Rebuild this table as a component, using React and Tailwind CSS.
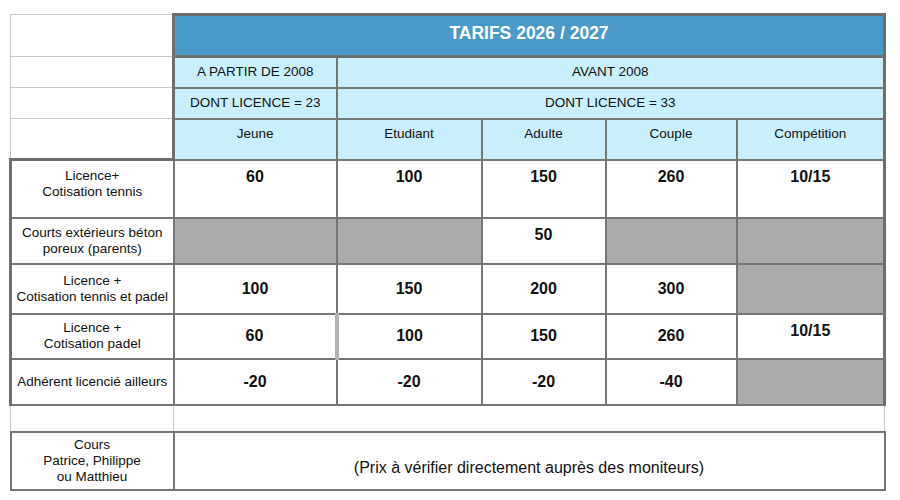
const light = "border border-[#c8c8c8]";
const dark = "border-2 border-[#767676]";
const grey = "bg-[#ababab]";

const rows = [
  {
    label: ["Licence+", "Cotisation tennis"],
    h: "h-[58px]",
    labelAlign: "align-top pt-[7px]",
    cells: [
      { v: "60", a: "top" },
      { v: "100", a: "top" },
      { v: "150", a: "top" },
      { v: "260", a: "top" },
      { v: "10/15", a: "top" },
    ],
  },
  {
    label: ["Courts extérieurs béton", "poreux (parents)"],
    h: "h-[46px]",
    labelAlign: "align-middle",
    cells: [null, null, { v: "50", a: "top" }, null, null],
  },
  {
    label: ["Licence +", "Cotisation tennis et padel"],
    h: "h-[50px]",
    labelAlign: "align-middle",
    cells: [{ v: "100" }, { v: "150" }, { v: "200" }, { v: "300" }, null],
  },
  {
    label: ["Licence +", "Cotisation padel"],
    h: "h-[45px]",
    labelAlign: "align-middle",
    cells: [{ v: "60" }, { v: "100", odd: true }, { v: "150" }, { v: "260" }, { v: "10/15", a: "top" }],
  },
  {
    label: ["Adhérent licencié ailleurs"],
    h: "h-[46px]",
    labelAlign: "align-middle",
    cells: [{ v: "-20" }, { v: "-20" }, { v: "-20" }, { v: "-40" }, null],
  },
];

export default function App() {
  return (
    <div className="w-[900px] h-[500px] bg-white pt-[13px] pl-[9px] font-['Liberation_Sans',Arial,sans-serif] text-[#111]">
      <table className="table-fixed border-collapse w-[874px] text-[13.5px] leading-4">
        <colgroup>
          <col className="w-[163px]" />
          <col className="w-[163px]" />
          <col className="w-[145px]" />
          <col className="w-[124px]" />
          <col className="w-[131px]" />
          <col className="w-[148px]" />
        </colgroup>
        <tbody>
          {/* header block */}
          <tr className="h-[42px]">
            <td className={light}></td>
            <td
              colSpan={5}
              className="border-[3px] border-[#6e6e6e] bg-[#4a9ac9] text-white font-bold text-[17.5px] text-center align-middle pb-[5px]"
            >
              TARIFS 2026 / 2027
            </td>
          </tr>
          <tr className="h-[31px]">
            <td className={light}></td>
            <td className={`${dark} border-l-[3px] border-l-[#6e6e6e] bg-[#c9eefc] text-center`}>A PARTIR DE 2008</td>
            <td colSpan={4} className={`${dark} border-r-[3px] border-r-[#6e6e6e] bg-[#c9eefc] text-center`}>
              AVANT 2008
            </td>
          </tr>
          <tr className="h-[31px]">
            <td className={light}></td>
            <td className={`${dark} border-l-[3px] border-l-[#6e6e6e] bg-[#c9eefc] text-center`}>DONT LICENCE = 23</td>
            <td colSpan={4} className={`${dark} border-r-[3px] border-r-[#6e6e6e] bg-[#c9eefc] text-center`}>
              DONT LICENCE = 33
            </td>
          </tr>
          <tr className="h-[41px]">
            <td className={light}></td>
            {["Jeune", "Etudiant", "Adulte", "Couple", "Compétition"].map((t, i) => (
              <td
                key={t}
                className={`${dark} ${i === 0 ? "border-l-[3px] border-l-[#6e6e6e]" : ""} ${
                  i === 4 ? "border-r-[3px] border-r-[#6e6e6e]" : ""
                } bg-[#c9eefc] text-center align-top pt-[6px]`}
              >
                {t}
              </td>
            ))}
          </tr>

          {/* prices */}
          {rows.map((r, ri) => (
            <tr key={ri} className={r.h}>
              <td
                className={`${dark} border-l-[3px] border-l-[#6e6e6e] ${
                  ri === 0 ? "border-t-[3px] border-t-[#6e6e6e]" : ""
                } text-center ${r.labelAlign}`}
              >
                {r.label.map((l) => (
                  <div key={l}>{l}</div>
                ))}
              </td>
              {r.cells.map((c, ci) => (
                <td
                  key={ci}
                  className={`${dark} ${ci === 4 ? "border-r-[3px] border-r-[#6e6e6e]" : ""} ${
                    c && c.odd ? "border-l-4 border-l-[#b4b4b4]" : ""
                  } ${c ? "bg-white" : grey} text-center font-bold text-[16px] ${
                    c && c.a === "top" ? "align-top pt-[8px]" : "align-middle"
                  }`}
                >
                  {c ? c.v : ""}
                </td>
              ))}
            </tr>
          ))}

          {/* spacer */}
          <tr className="h-[27px]">
            <td className={`${light} border-t-0`}></td>
            <td colSpan={5} className={`${light} border-t-0`}></td>
          </tr>

          {/* lessons */}
          <tr className="h-[58px]">
            <td className={`${dark} text-center align-middle`}>
              <div>Cours</div>
              <div>Patrice, Philippe</div>
              <div>ou Matthieu</div>
            </td>
            <td colSpan={5} className={`${dark} text-center align-middle pt-[14px] text-[16px]`}>
              (Prix à vérifier directement auprès des moniteurs)
            </td>
          </tr>
        </tbody>
      </table>
    </div>
  );
}
